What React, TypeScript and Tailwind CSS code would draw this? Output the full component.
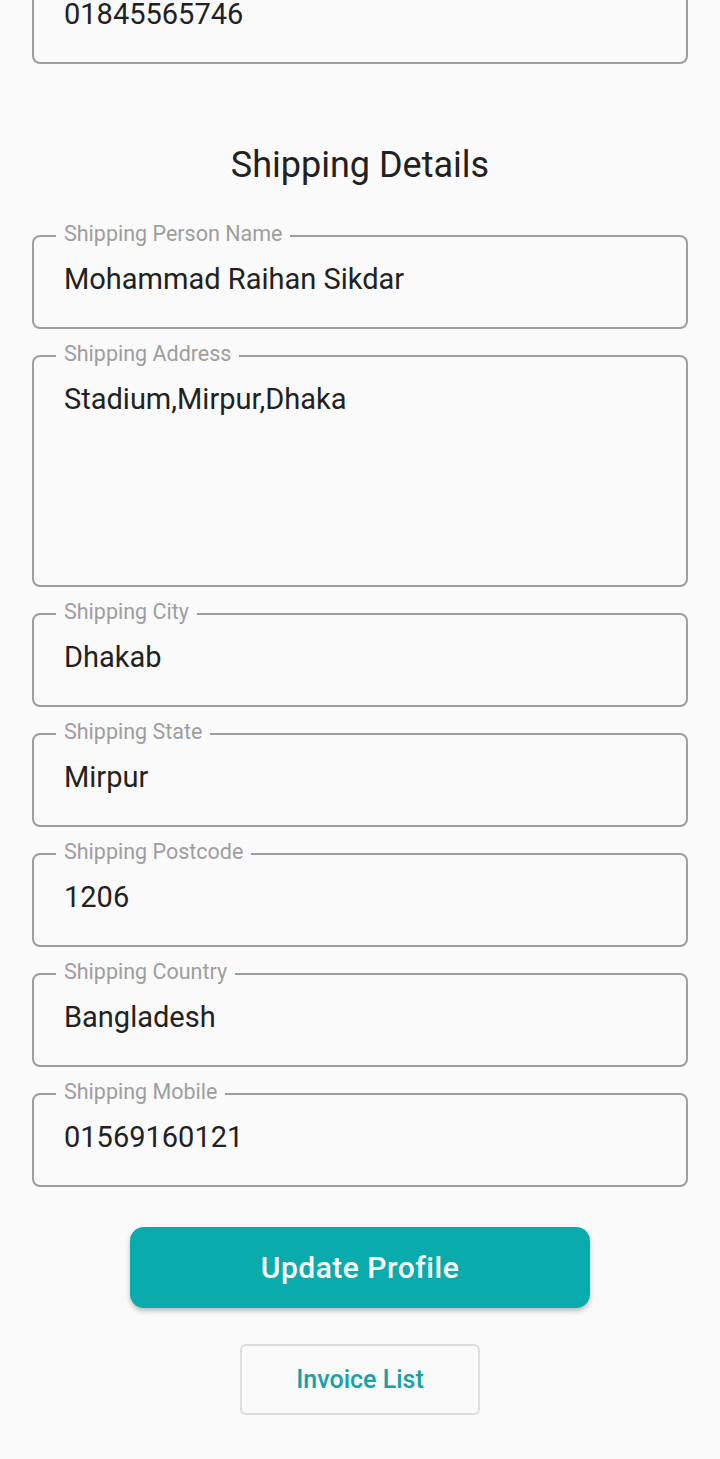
import React from "react";

interface FieldProps {
  label?: string;
  value: string;
  tall?: boolean;
  className?: string;
}

const Field: React.FC<FieldProps> = ({ label, value, tall, className }) => {
  return (
    <div
      className={`relative w-full ${tall ? "h-[232px]" : "h-[94px]"} border-2 border-[#9e9e9e] rounded-lg pl-[30px] pt-6 ${className ?? ""}`}
    >
      {label && (
        <span className="absolute left-[22px] top-[-16px] px-2 bg-[#fafafa] text-[21.5px] leading-[26px] text-[#9e9e9e]">
          {label}
        </span>
      )}
      <div className="text-[29px] leading-9 text-[#212121]">{value}</div>
    </div>
  );
};

const App: React.FC = () => {
  const shipping = [
    { label: "Shipping Person Name", value: "Mohammad Raihan Sikdar" },
    { label: "Shipping Address", value: "Stadium,Mirpur,Dhaka", tall: true },
    { label: "Shipping City", value: "Dhakab" },
    { label: "Shipping State", value: "Mirpur" },
    { label: "Shipping Postcode", value: "1206" },
    { label: "Shipping Country", value: "Bangladesh" },
    { label: "Shipping Mobile", value: "01569160121" },
  ];

  return (
    <div
      className="min-h-[1459px] bg-[#fafafa] overflow-hidden px-8"
      style={{ fontFamily: "Roboto, 'Noto Sans', sans-serif" }}
    >
      <Field value="01845565746" className="mt-[-30px]" />

      <h2 className="mt-[81px] text-center text-[36px] leading-10 text-[#212121]">
        Shipping Details
      </h2>

      <div className="mt-[50px] flex flex-col gap-[26px]">
        {shipping.map((f) => (
          <Field key={f.label} label={f.label} value={f.value} tall={f.tall} />
        ))}
      </div>

      <div className="mt-10 flex flex-col items-center">
        <button className="w-[460px] h-[81px] rounded-[14px] bg-[#0aabad] text-white text-[30px] font-medium tracking-[0.5px] shadow-[0_3px_5px_rgba(0,0,0,0.25)]">
          Update Profile
        </button>
        <button className="mt-9 w-[240px] h-[71px] rounded-md border-2 border-[#dddddd] text-[#14a2a5] text-[25px] font-medium">
          Invoice List
        </button>
      </div>
    </div>
  );
};

export default App;
